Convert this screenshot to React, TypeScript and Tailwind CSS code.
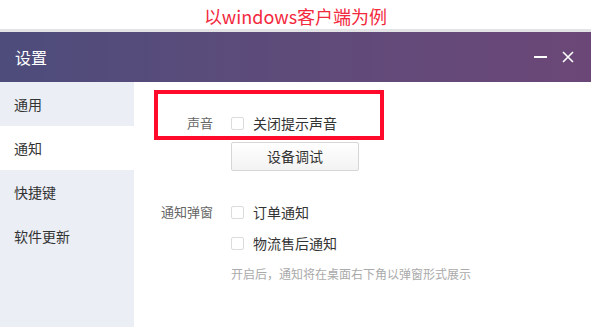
import React from "react";

const menu = ["通用", "通知", "快捷键", "软件更新"];

function Checkbox() {
  return <span className="w-[13px] h-[13px] shrink-0 rounded-[2px] border border-[#dcdcdc] bg-white" />;
}

export default function App() {
  return (
    <div
      className="w-[591px] h-[332px] bg-white flex flex-col overflow-hidden"
      style={{ fontFamily: '"Noto Sans CJK SC", "Noto Sans", sans-serif' }}
    >
      {/* caption */}
      <div className="h-[29px] flex items-center justify-center text-[18px] leading-none text-[#f2293d] pt-[3px]">
        以windows客户端为例
      </div>
      <div className="h-[3px] bg-[#e3e3e6]" />

      {/* title bar */}
      <div className="h-[50px] flex items-center justify-between pl-[15px] pr-[17px] bg-gradient-to-r from-[#4d4c7b] via-[#5e4b7a] to-[#6b4777] text-white">
        <span className="text-[16px] leading-none">设置</span>
        <div className="flex items-center gap-[15px]">
          <span className="w-[13px] h-[2px] bg-white" />
          <svg width="12" height="12" viewBox="0 0 12 12" stroke="white" strokeWidth="1.6">
            <path d="M1 1L11 11M11 1L1 11" />
          </svg>
        </div>
      </div>

      <div className="h-[245px] flex">
        {/* sidebar */}
        <div className="w-[134px] bg-[#ebeef5] flex flex-col">
          {menu.map((m, i) => (
            <div
              key={m}
              className={`h-[44px] flex items-center pl-[14px] text-[14px] text-[#333] ${i === 1 ? "bg-white" : ""}`}
            >
              {m}
            </div>
          ))}
        </div>

        {/* content */}
        <div className="flex-1 flex flex-col pl-[20px] pt-[8px] text-[14px]">
          <div className="w-[230px] h-[50px] border-4 border-[#ff0a2b] pt-[19px]">
            <div className="h-[20px] flex items-center">
              <span className="w-[55px] text-right text-[13px] text-[#666]">声音</span>
              <span className="ml-[18px] flex items-center gap-[9px]">
                <Checkbox />
                <span className="text-[#333]">关闭提示声音</span>
              </span>
            </div>
          </div>

          <button className="ml-[77px] mt-[2px] w-[128px] h-[29px] rounded-[2px] border border-[#d6d6d6] bg-gradient-to-b from-white to-[#f3f3f3] text-[14px] text-[#333]">
            设备调试
          </button>

          <div className="mt-[31px] h-[20px] flex items-center">
            <span className="w-[59px] text-right text-[13px] text-[#666]">通知弹窗</span>
            <span className="ml-[18px] flex items-center gap-[9px]">
              <Checkbox />
              <span className="text-[#333]">订单通知</span>
            </span>
          </div>

          <div className="mt-[11px] h-[20px] flex items-center pl-[77px] gap-[9px]">
            <Checkbox />
            <span className="text-[#333]">物流售后通知</span>
          </div>

          <div className="mt-[13px] pl-[77px] text-[12px] leading-[16px] text-[#aaa]">
            开启后，通知将在桌面右下角以弹窗形式展示
          </div>
        </div>
      </div>
    </div>
  );
}
